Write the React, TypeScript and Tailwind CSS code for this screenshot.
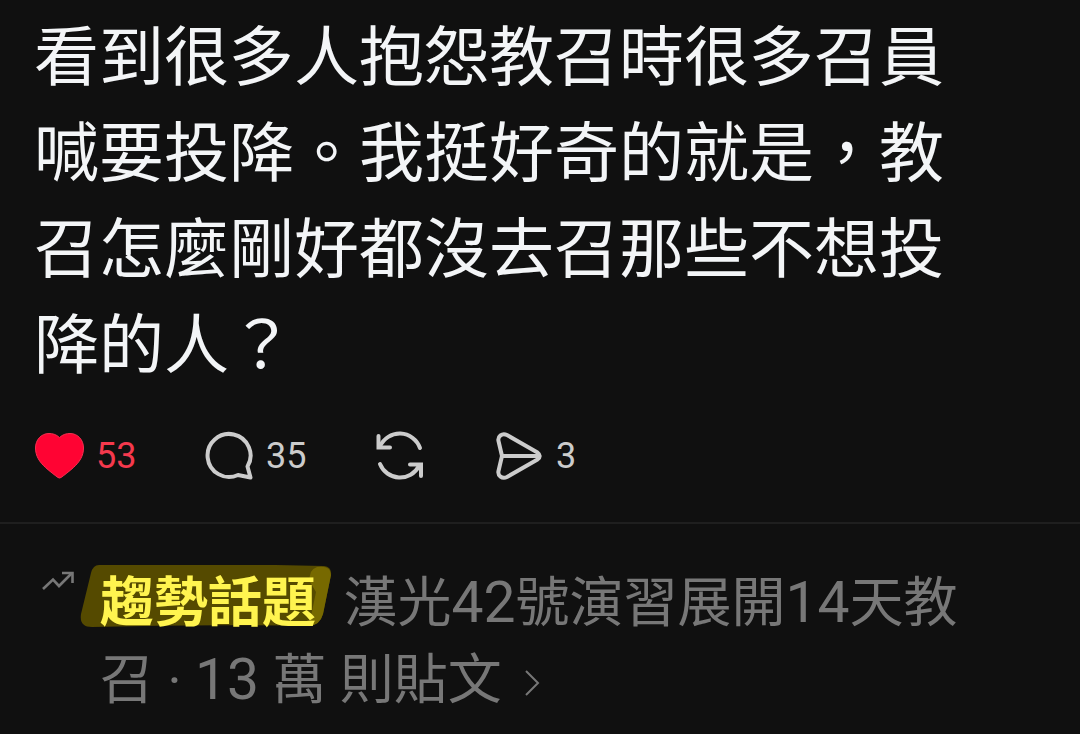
import type { ReactNode } from "react";

type ActionProps = {
    label: string;
    count?: number;
    className?: string;
    children: ReactNode;
};

function Action({ label, count, className = "text-[#cccccc]", children }: ActionProps) {
    return (
        <button type="button" aria-label={label} className={`flex items-center gap-[11px] ${className}`}>
            {children}
            {count !== undefined && <span>{count}</span>}
        </button>
    );
}

function HeartIcon() {
    return (
        <svg width="50" height="50" viewBox="0 0 50 50" fill="#ff0333" stroke="#f5304f" strokeWidth="1">
            <path d="M24.500 6.500C21 3.300 17.500 2.500 14 2.500C6 2.500 0.500 9 0.500 17C0.500 25 4.500 31 10.500 36.500C15 40.500 19.500 44 23 46.500Q24.500 47.500 26 46.500C29.500 44 34 40.500 38.500 36.500C44.500 31 48.500 25 48.500 17C48.500 9 43 2.500 35 2.500C31.500 2.500 28 3.300 24.500 6.500Z" />
        </svg>
    );
}

function ReplyIcon() {
    return (
        <svg width="50" height="50" viewBox="1 0 50 50" fill="none" stroke="currentColor" strokeWidth="4" strokeLinejoin="round">
            <path d="M43.5 35.5A21.5 21.5 0 1 0 34 44L46.5 46.5Z" />
        </svg>
    );
}

function RepostIcon() {
    return (
        <svg width="50" height="50" viewBox="0 0 50 50" fill="none" stroke="currentColor" strokeWidth="4" strokeLinecap="round" strokeLinejoin="miter">
            <path d="M45 17A21.5 21.5 0 0 0 5 15.5" />
            <path d="M3.5 5V16.5H15" />
            <path d="M5 33A21.5 21.5 0 0 0 44 35" />
            <path d="M35 33.5H46V45" />
        </svg>
    );
}

function SendIcon() {
    return (
        <svg width="50" height="50" viewBox="0 0 50 50" fill="none" stroke="currentColor" strokeWidth="4" strokeLinejoin="round">
            <path d="M12 4L42.5 21.5Q47 25 42.5 28.5L12 46C7 48.5 2.5 44.5 3.5 40L7 25L3.5 10C2.5 5.5 7 1.5 12 4Z" />
            <path d="M7 25H45" />
        </svg>
    );
}

function TrendIcon() {
    return (
        <svg className="shrink-0" width="32" height="20" viewBox="0 0 32 20" fill="none" stroke="#777777" strokeWidth="2.6">
            <path d="M1 18L11 8.5L17 15L30 2" />
            <path d="M20 2H30.5V12" />
        </svg>
    );
}

// Marker stroke drawn behind the topic label
function Marker() {
    return (
        <svg className="absolute -left-5 top-0 -z-10 h-16 w-[252px]" viewBox="0 1 252 64" fill="#554a00" aria-hidden="true">
            <path d="M19 1Q120 -1 244 2Q252 3 251 11L243 50Q240 61 229 62Q120 60 12 63Q-1 63 1 50L11 9Q13 1 19 1Z" />
            <path d="M237 3Q251 1 251 11L243 50Q240 61 229 62L236 28L230 18Q228 6 237 3Z" fill="#776900" />
        </svg>
    );
}

// Digits run slightly larger than the Han text around them
function Digits({ children }: { children: ReactNode }) {
    return <span className="text-[57px] leading-none">{children}</span>;
}

export default function App() {
    return (
        <main className="min-h-screen bg-[#101010] font-[Roboto,'Noto_Sans_CJK_TC',sans-serif]">
            <article className="pt-2.5">
                <p lang="zh-Hant" className="pl-[34px] pr-24 text-[65px] leading-[96px] text-[#f3f5f7]">
                    看到很多人抱怨教召時很多召員喊要投降。我挺好奇的就是，教召怎麼剛好都沒去召那些不想投降的人？
                </p>
                <div className="flex items-center pl-[35px] pt-[37px] pb-[41px] text-4xl">
                    <Action label="Like" count={53} className="w-[170px] text-[#f5394d]">
                        <HeartIcon />
                    </Action>
                    <Action label="Reply" count={35} className="w-[170px] text-[#cccccc]">
                        <ReplyIcon />
                    </Action>
                    <Action label="Repost" className="w-[120px] text-[#cccccc]">
                        <RepostIcon />
                    </Action>
                    <Action label="Send" count={3}>
                        <SendIcon />
                    </Action>
                </div>
            </article>
            <a href="#trending" className="flex gap-[26px] border-t-2 border-[#1f1f1f] pl-[42px] pr-24 pt-[41px] text-[#777777]">
                <span className="pt-[6px]">
                    <TrendIcon />
                </span>
                <span lang="zh-Hant" className="text-[54px] leading-[77px]">
                    <span className="relative isolate mr-3.5 inline-block font-bold text-[#fff44f]">
                        <Marker />
                        趨勢話題
                    </span>{" "}
                    漢光<Digits>42</Digits>號演習展開<Digits>14</Digits>天教召 · <Digits>13</Digits> 萬 則貼文
                    <svg className="mb-1 ml-[22px] inline-block" width="16" height="28" viewBox="0 0 16 28" fill="none" stroke="currentColor" strokeWidth="2" aria-hidden="true">
                        <path d="M2 2L14 14L2 26" />
                    </svg>
                </span>
            </a>
        </main>
    );
}
